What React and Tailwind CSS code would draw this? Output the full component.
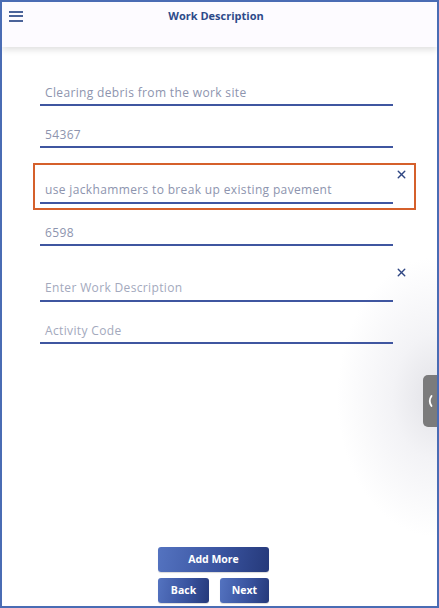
import { X } from 'lucide-react'

const fieldText = 'px-[5px] text-[12px] tracking-[0.35px] leading-[14px] text-[#8d94ae]'
const underline = 'border-b-2 border-[#3f56a0]'
const font = { fontFamily: '"Open Sans", "Liberation Sans", sans-serif' }

function Field({ value, placeholder, height = 'h-[42px]' }) {
  return (
    <div className={`flex w-[353px] flex-col justify-end ${height} ${underline}`}>
      <div className={`${fieldText} pb-[4px] ${value ? '' : 'text-[#a3a9bd]'}`}>{value || placeholder}</div>
    </div>
  )
}

function RemovableField({ value, placeholder, highlight }) {
  return (
    <div
      className={`ml-[31px] mt-[15px] w-[383px] border-2 pb-[4px] pl-[5px] ${
        highlight ? 'border-[#d5602b]' : 'border-transparent'
      }`}
    >
      <div className="flex h-[18px] items-center justify-end pr-[6px]">
        <X size={13} strokeWidth={2.6} className="text-[#2e4683]" />
      </div>
      <div className={`w-[353px] ${underline}`}>
        <div className={`${fieldText} pb-[5px] ${value ? '' : 'text-[#a3a9bd]'}`}>{value || placeholder}</div>
      </div>
    </div>
  )
}

const btn =
  'flex h-[25px] items-center justify-center rounded-[3px] bg-[linear-gradient(100deg,#5473c0_0%,#3a54a0_55%,#25397a_100%)] text-[10.5px] font-bold text-white shadow-[0_1px_1px_rgba(0,0,0,0.15)]'

export default function App() {
  return (
    <div
      style={font}
      className="relative flex h-[608px] w-[439px] flex-col overflow-hidden border-2 border-[#4a6cb4] bg-[radial-gradient(ellipse_100px_140px_at_100%_395px,#e2e2e7_0%,#f3f3f6_45%,#ffffff_100%)]"
    >
      <header className="relative z-10 h-[45px] shrink-0 bg-[#fdfbff] shadow-[0_3px_6px_rgba(0,0,0,0.12)]">
        <div className="flex h-[28px] items-center px-[7px]">
          <div className="flex w-[14px] flex-col gap-[2.5px]">
            <span className="h-[2px] bg-[#4b6399]" />
            <span className="h-[2px] bg-[#4b6399]" />
            <span className="h-[2px] bg-[#4b6399]" />
          </div>
          <h1 className="flex-1 pr-[21px] text-center text-[11px] font-bold text-[#2d4a8a]">Work Description</h1>
        </div>
      </header>

      <main className="pt-[17px]">
        <div className="ml-[38px]">
          <Field value="Clearing debris from the work site" />
          <Field value="54367" />
        </div>
        <RemovableField value="use jackhammers to break up existing pavement" highlight />
        <div className="ml-[38px]">
          <Field value="6598" height="h-[36px]" />
        </div>
        <RemovableField placeholder="Enter Work Description" />
        <div className="ml-[38px]">
          <Field placeholder="Activity Code" height="h-[36px]" />
        </div>
      </main>

      <div className="flex-1" />

      <footer className="flex flex-col items-center gap-[6px] pb-[3px] pr-[12px]">
        <button className={`${btn} w-[111px]`}>Add More</button>
        <div className="flex gap-[11px]">
          <button className={`${btn} w-[51px]`}>Back</button>
          <button className={`${btn} w-[49px]`}>Next</button>
        </div>
      </footer>

      <div className="absolute right-0 top-[373px] flex h-[52px] w-[14px] items-center justify-center rounded-l-[5px] bg-[#7b7b7c]">
        <svg width="6" height="12" viewBox="0 0 6 12" fill="none">
          <path d="M4.5 1 Q1 6 4.5 11" stroke="white" strokeWidth="1.8" strokeLinecap="round" />
        </svg>
      </div>
    </div>
  )
}
